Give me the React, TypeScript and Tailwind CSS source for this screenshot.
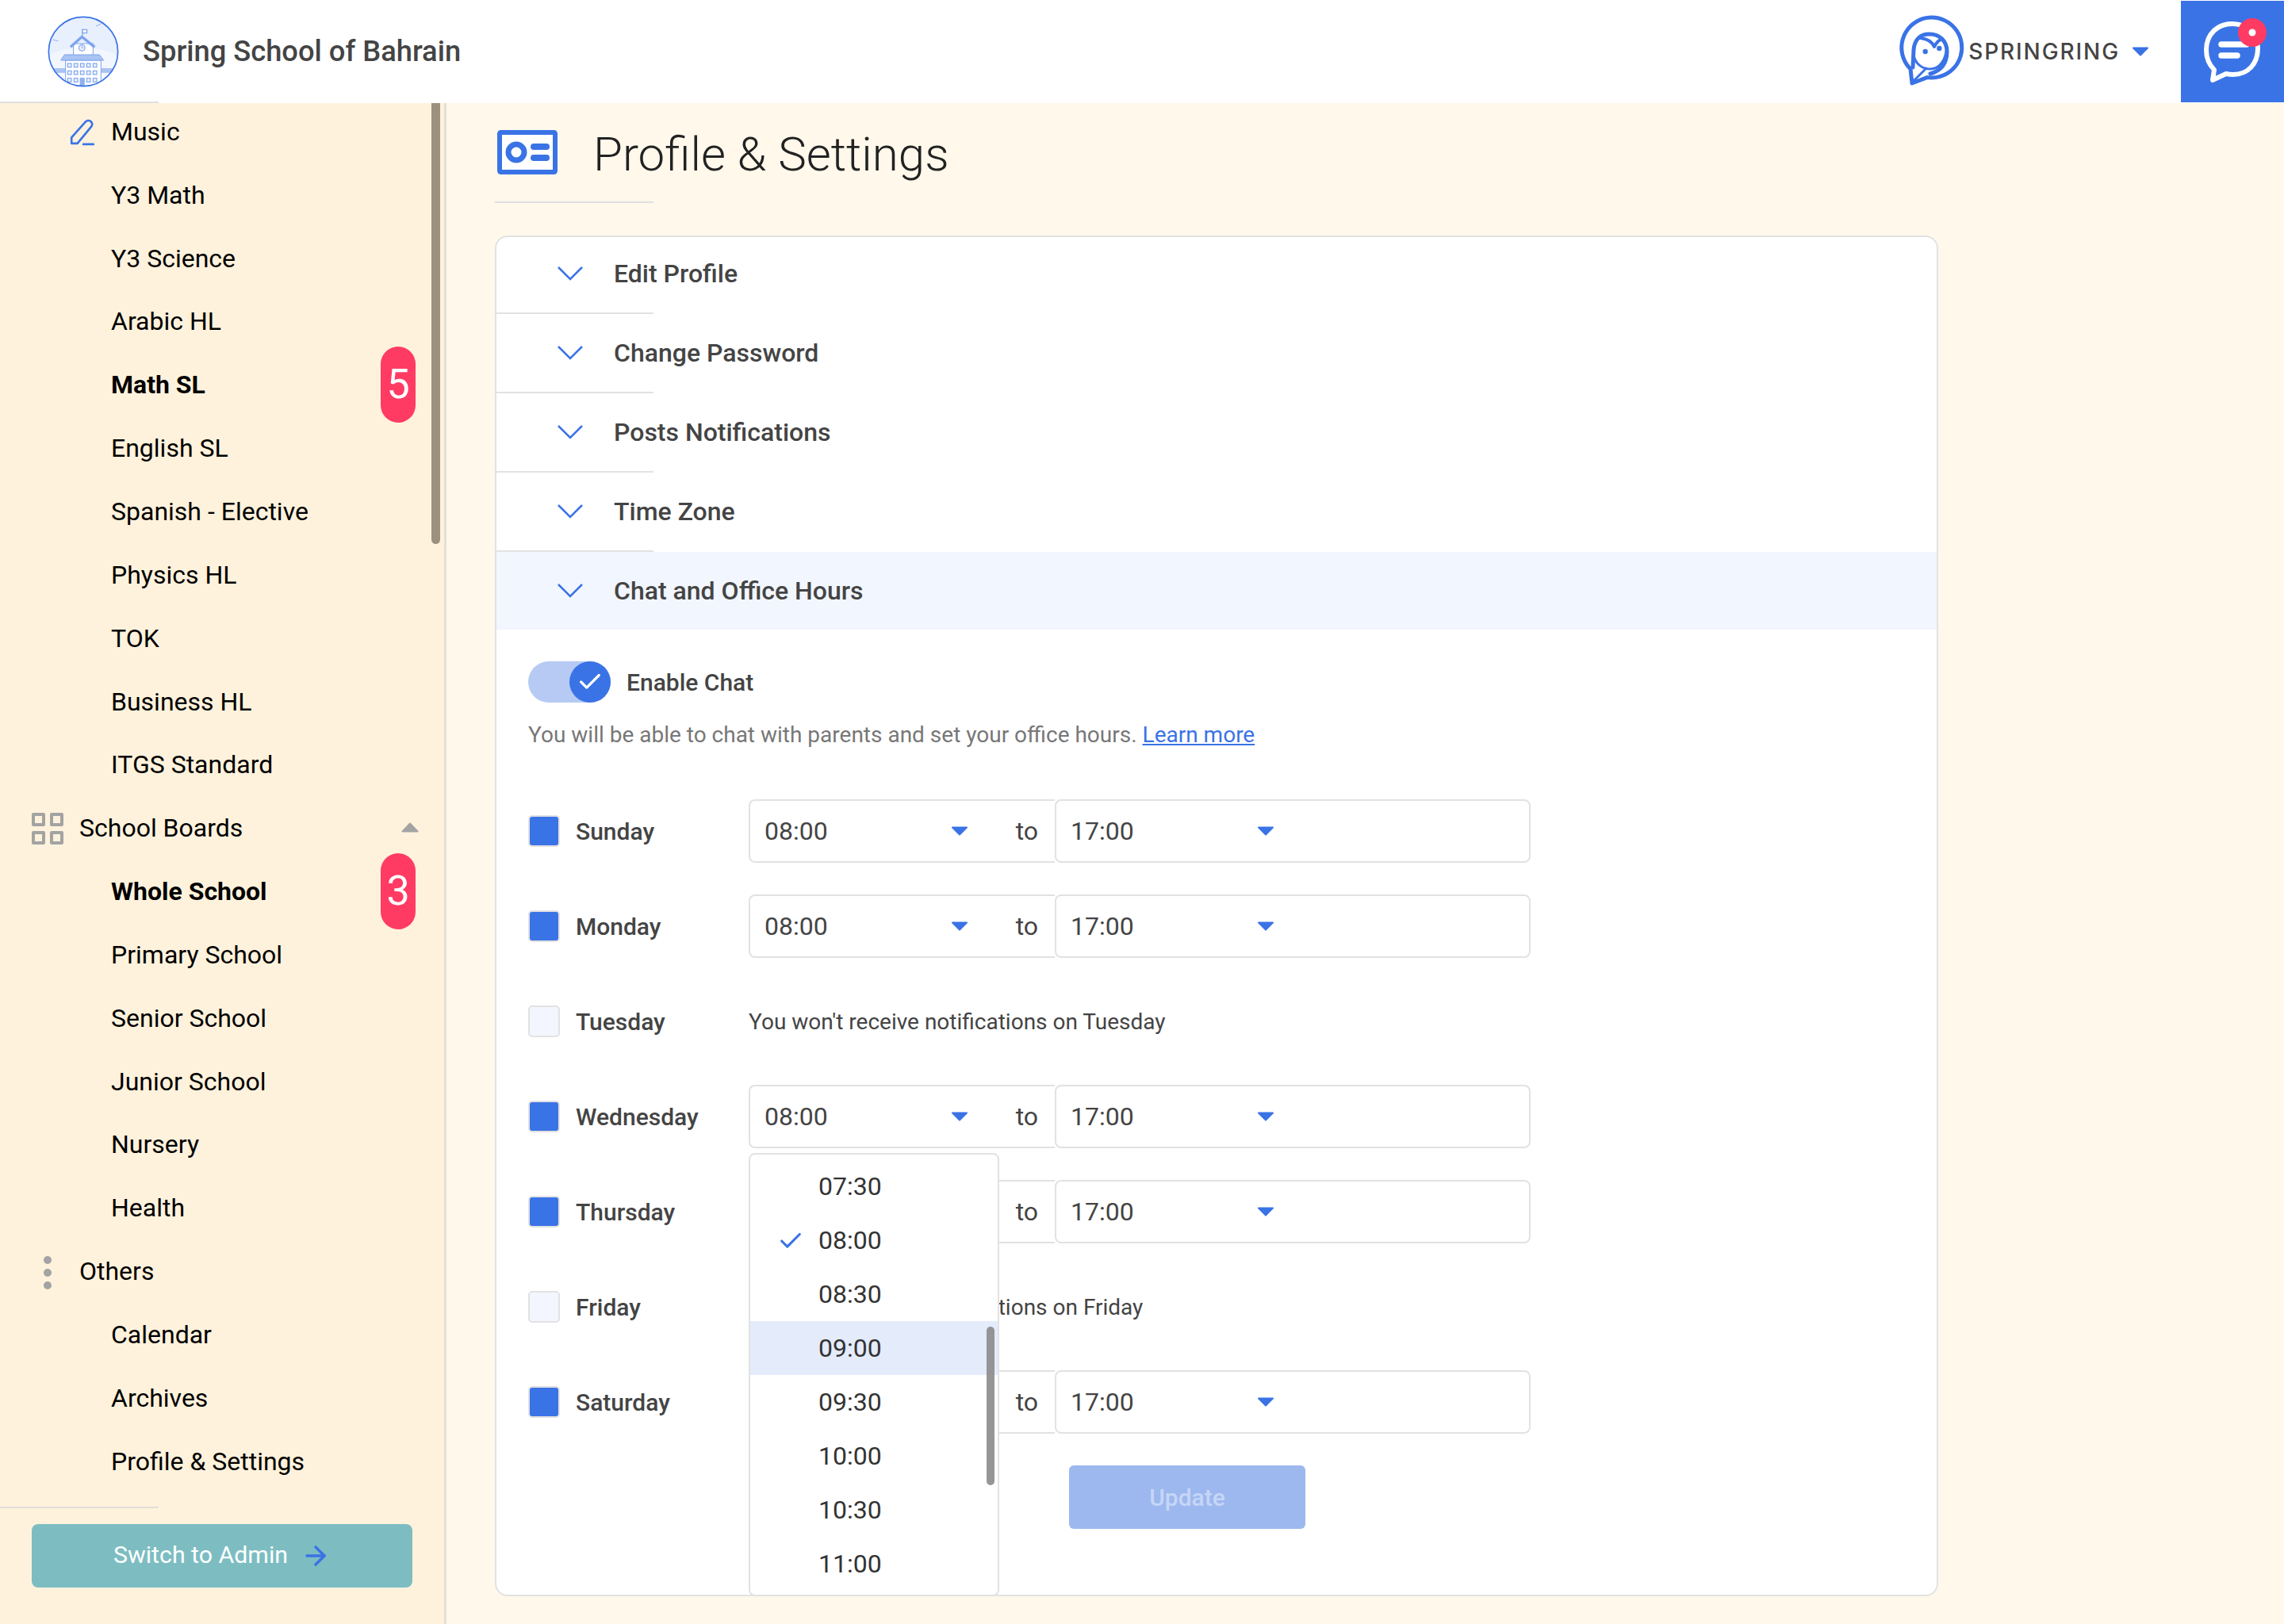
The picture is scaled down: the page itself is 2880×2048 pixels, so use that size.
import React from "react";
import { Check, ArrowRight } from "lucide-react";

const BLUE = "#3a73e6";

const SchoolLogo = () => (
  <svg viewBox="60 60 270 270" className="w-[90px] h-[90px] shrink-0">
    <defs>
      <clipPath id="logoClip">
        <circle cx="195" cy="195" r="131" />
      </clipPath>
    </defs>
    <circle cx="195" cy="195" r="131" fill="#e8effd" />
    <g clipPath="url(#logoClip)">
      <ellipse cx="195" cy="290" rx="190" ry="110" fill="#f2f6fe" />
      <rect x="60" y="258" width="270" height="16" fill="#a9c3f3" />
      <rect x="60" y="274" width="270" height="60" fill="#f5f8ff" stroke="#a9c3f3" strokeWidth="3" />
      <rect x="128" y="228" width="134" height="104" fill="#fff" stroke="#7da3ee" strokeWidth="3" />
      <rect x="158" y="165" width="74" height="44" fill="#fff" stroke="#7da3ee" strokeWidth="3" />
      <path d="M147 178L190 139L238 178" fill="none" stroke="#7da3ee" strokeWidth="10" />
      <path d="M124 207H256L272 228H110Z" fill="#a9c3f3" stroke="#7da3ee" strokeWidth="3" />
      <circle cx="190" cy="181" r="12" fill="#e8effd" stroke="#6f9aeb" strokeWidth="3" />
      <path d="M190 172V181H196" fill="none" stroke="#6f9aeb" strokeWidth="2" />
      <path d="M192 135V110" stroke="#6f9aeb" strokeWidth="3" />
      <rect x="192" y="112" width="17" height="13" fill="#f2f6fe" stroke="#6f9aeb" strokeWidth="3" />
      {[247, 275, 303].map((y) =>
        [136, 160, 184, 208, 232].map((x) => (
          <rect key={`${x}-${y}`} x={x} y={y - 7} width="14" height="14" fill="#e8effd" stroke="#6f9aeb" strokeWidth="3" />
        ))
      )}
      <rect x="182" y="298" width="18" height="34" fill="#8fb0f0" />
      <path d="M243 99L262 90L272 84M80 150L100 155M316 162L326 163" stroke="#8fb0f0" strokeWidth="3" fill="none" />
    </g>
    <circle cx="195" cy="195" r="131" fill="none" stroke={BLUE} strokeWidth="5" />
  </svg>
);

const OwlLogo = () => (
  <svg viewBox="0 0 86 100" className="w-[86px] h-[100px] shrink-0">
    <g fill="none" stroke={BLUE} strokeWidth="5" strokeLinejoin="round" strokeLinecap="round">
      <path d="M17 72A38 38 0 1 1 38 82.600L19 90Z" fill="#fff" />
      <path d="M20 70L21 48C22 34 30 28 41 28C54 28 63 37 63 50C63 64 56 74 42 78" />
      <path d="M22 58C25 67 33 72 42 72C53 72 60 62 62 50" strokeWidth="3" />
      <path d="M30 33C38 34 44 37 47 44C50 38 54 35 57 34" strokeWidth="4" />
      <path d="M21 87L37 71" strokeWidth="3" />
    </g>
    <circle cx="35.700" cy="50" r="3.200" fill={BLUE} />
    <circle cx="53.300" cy="46" r="3.200" fill={BLUE} />
  </svg>
);

const ChatBadge = () => (
  <svg viewBox="0 0 130 128" className="w-[130px] h-[128px]">
    <path
      d="M42 87C35 80 32 71 32 62C32 42 46 29 65 29C84 29 97 43 97 60C97 80 84 93 66 93C62 93 59 92.500 57 92L40 100Z"
      fill="none"
      stroke="#fff"
      strokeWidth="6"
      strokeLinejoin="round"
    />
    <path d="M51 55H83M51 69H71" stroke="#fff" strokeWidth="7.500" strokeLinecap="round" />
    <circle cx="90" cy="40" r="18" fill="#ff3b64" />
    <circle cx="90" cy="40" r="4.500" fill="#fff" />
  </svg>
);

const Caret = ({ className = "" }: { className?: string }) => (
  <svg viewBox="0 0 22 12" className={`w-[22px] h-[12px] shrink-0 ${className}`}>
    <path d="M2 1.500H20L11 10.500Z" fill={BLUE} stroke={BLUE} strokeWidth="2" strokeLinejoin="round" />
  </svg>
);

const NavItem = ({ label, bold, badge }: { label: string; bold?: boolean; badge?: string }) => (
  <div className="relative h-[79.850px] shrink-0 flex items-center pl-[140px]">
    <span className={`text-[32px] text-black ${bold ? "font-bold" : ""}`}>{label}</span>
    {badge && (
      <span className="absolute left-[480px] top-[-8px] w-[44px] h-[96px] rounded-full bg-[#ff3b64] text-white text-[52px] flex items-center justify-center">
        {badge}
      </span>
    )}
  </div>
);

const Sidebar = () => (
  <aside className="relative w-[563px] shrink-0 bg-[#fff2dc] border-r-[3px] border-[#e4e0d8] flex flex-col overflow-hidden">
    <div className="flex-1 overflow-hidden">
      <div className="relative h-[79.850px] -mt-[4px] flex items-center pl-[140px]">
        <svg viewBox="0 0 32 32" className="absolute left-[87px] top-[24px] w-[34px] h-[34px]" fill="none" stroke={BLUE} strokeWidth="2.500" strokeLinejoin="round" strokeLinecap="round">
          <path d="M3 29V22L20 3C22 1.500 24 1.500 26 3C28 5 28 7 26.500 9L10 29ZM17 30H29" />
        </svg>
        <span className="text-[32px] text-black">Music</span>
      </div>
      <NavItem label="Y3 Math" />
      <NavItem label="Y3 Science" />
      <NavItem label="Arabic HL" />
      <NavItem label="Math SL" bold badge="5" />
      <NavItem label="English SL" />
      <NavItem label="Spanish - Elective" />
      <NavItem label="Physics HL" />
      <NavItem label="TOK" />
      <NavItem label="Business HL" />
      <NavItem label="ITGS Standard" />
      <div className="relative h-[79.850px] flex items-center pl-[100px]">
        <div className="absolute left-[40px] top-[21px] grid grid-cols-2 gap-[6px] w-[40px]">
          {[0, 1, 2, 3].map((i) => (
            <span key={i} className="w-[17px] h-[17px] border-[4px] border-[#a3a3a3] rounded-[2px]" />
          ))}
        </div>
        <span className="text-[32px] text-black">School Boards</span>
        <svg viewBox="0 0 22 13" className="absolute left-[506px] top-[33px] w-[22px] h-[13px]">
          <path d="M11 1.500L20.500 11.500H1.500Z" fill="#a3a3a3" stroke="#a3a3a3" strokeWidth="2" strokeLinejoin="round" />
        </svg>
      </div>
      <NavItem label="Whole School" bold badge="3" />
      <NavItem label="Primary School" />
      <NavItem label="Senior School" />
      <NavItem label="Junior School" />
      <NavItem label="Nursery" />
      <NavItem label="Health" />
      <div className="relative h-[79.850px] flex items-center pl-[100px]">
        <div className="absolute left-[55px] top-[21px] flex flex-col gap-[6px]">
          <span className="w-[10px] h-[10px] rounded-full bg-[#a3a3a3]" />
          <span className="w-[10px] h-[10px] rounded-full bg-[#a3a3a3]" />
          <span className="w-[10px] h-[10px] rounded-full bg-[#a3a3a3]" />
        </div>
        <span className="text-[32px] text-black">Others</span>
      </div>
      <NavItem label="Calendar" />
      <NavItem label="Archives" />
      <NavItem label="Profile & Settings" />
    </div>
    <div className="w-[200px] h-[2px] bg-[#e2ded8] shrink-0" />
    <div className="shrink-0 px-[40px] pt-[20px] pb-[46px]">
      <button className="w-[480px] h-[80px] rounded-[8px] bg-[#7dbdc2] text-white text-[30.300px] flex items-center justify-center gap-[16px]">
        <span className="-mt-[3px]">Switch to Admin</span>
        <ArrowRight size={38} color={BLUE} strokeWidth={2.200} />
      </button>
    </div>
    <span className="absolute left-[544px] top-0 w-[11px] h-[556px] rounded-b-[6px] bg-[#9c917f]" />
  </aside>
);

const SECTIONS = ["Edit Profile", "Change Password", "Posts Notifications", "Time Zone"];

const AccordionRow = ({ label, open }: { label: string; open?: boolean }) => (
  <div className={`h-[98px] flex items-center ${open ? "bg-[#f2f6fe]" : ""}`}>
    <svg viewBox="0 0 32 18" className="ml-[77px] w-[32px] h-[18px]" fill="none" stroke={BLUE} strokeWidth="2.500">
      <path d="M1 1L16 16L31 1" />
    </svg>
    <span className="ml-[39px] text-[32px] font-medium text-[#444]">{label}</span>
  </div>
);

const TIMES = ["07:30", "08:00", "08:30", "09:00", "09:30", "10:00", "10:30", "11:00"];

const TimeDropdown = () => (
  <div className="absolute left-0 top-[86px] z-10 w-[316px] h-[559px] bg-white border-2 border-[#e2e2e2] rounded-[8px] pt-[6px] overflow-hidden">
    {TIMES.map((t) => (
      <div key={t} className={`relative h-[68px] flex items-center pl-[86px] text-[32px] text-[#333] ${t === "09:00" ? "bg-[#e4ebfb]" : ""}`}>
        {t === "08:00" && <Check className="absolute left-[34px] top-[18px] w-[34px] h-[34px]" color={BLUE} strokeWidth={2.200} />}
        {t}
      </div>
    ))}
    <span className="absolute right-[4px] top-[217px] w-[10px] h-[200px] rounded-full bg-[#8b8b8b]/90" />
  </div>
);

const DayRow = ({ day, off, open }: { day: string; off?: boolean; open?: boolean }) => (
  <div className="h-[120px] flex items-center">
    <span className={`w-[40px] h-[40px] rounded-[5px] border-2 border-[#e2e2e2] shrink-0 ${off ? "bg-[#f3f6fe]" : "bg-[#3a73e6]"}`} />
    <span className="w-[238px] pl-[20px] shrink-0 text-[30px] font-medium text-[#444]">{day}</span>
    {off ? (
      <span className="pt-[2px] text-[28px] text-[#444]">You won't receive notifications on {day}</span>
    ) : (
      <div className="relative flex w-[986px] h-[80px]">
        <div className="w-[386px] h-full border-2 border-r-0 border-[#e2e2e2] rounded-l-[8px] flex items-center pl-[18px] text-[32px] text-[#444]">
          <span>08:00</span>
          <Caret className="ml-[155px]" />
          <span className="ml-[60px]">to</span>
        </div>
        <div className="flex-1 h-full border-2 border-[#e2e2e2] rounded-[8px] flex items-center pl-[18px] text-[32px] text-[#444]">
          <span>17:00</span>
          <Caret className="ml-[155px]" />
        </div>
        {open && <TimeDropdown />}
      </div>
    )}
  </div>
);

export default function App() {
  return (
    <div className="w-[2880px] h-[2048px] overflow-hidden flex flex-col bg-[#fff8eb] [font-family:Roboto,sans-serif]">
      <header className="relative h-[130px] shrink-0 bg-white flex items-center">
        <div className="ml-[60px]">
          <SchoolLogo />
        </div>
        <span className="ml-[30px] text-[36.300px] font-medium text-[#444]">Spring School of Bahrain</span>
        <div className="ml-auto flex items-center">
          <OwlLogo />
          <span className="ml-[4px] text-[28px] font-medium tracking-[1.900px] text-[#444] [font-family:Inter,sans-serif]">SPRINGRING</span>
          <Caret className="ml-[15px] mr-[40px]" />
          <div className="w-[130px] h-[128px] self-start bg-[#3a73e6]">
            <ChatBadge />
          </div>
        </div>
        <span className="absolute left-0 bottom-0 w-[200px] h-[2px] bg-[#e0e0e0]" />
      </header>
      <div className="flex-1 flex min-h-0">
        <Sidebar />
        <main className="flex-1 pl-[61px]">
          <div className="flex items-center h-[124px]">
            <svg viewBox="0 0 76 56" className="ml-[3px] w-[76px] h-[56px]">
              <rect x="3" y="3" width="70" height="50" rx="1.500" fill="#fff" stroke={BLUE} strokeWidth="6" />
              <circle cx="24" cy="28" r="10" fill="none" stroke={BLUE} strokeWidth="7" />
              <path d="M46 21H62M46 35H62" stroke={BLUE} strokeWidth="8" strokeLinecap="round" />
            </svg>
            <h1 className="ml-[45px] text-[60px] font-light text-[#222] mt-[6px]">Profile &amp; Settings</h1>
          </div>
          <div className="w-[200px] h-[2px] bg-[#e0e0e0]" />
          <section className="mt-[41px] w-[1820px] h-[1716px] bg-white border-2 border-[#e2e2e2] rounded-[16px]">
            <div className="-mt-[3px]">
              {SECTIONS.map((s) => (
                <div key={s}>
                  <AccordionRow label={s} />
                  <div className="w-[198px] h-[2px] bg-[#e2e2e2]" />
                </div>
              ))}
              <AccordionRow label="Chat and Office Hours" open />
            </div>
            <div className="pl-[40px]">
              <div className="mt-[40px] flex items-center">
                <div className="relative w-[104px] h-[52px] rounded-full bg-[#b6caf4]">
                  <span className="absolute right-0 top-0 w-[52px] h-[52px] rounded-full bg-[#3a73e6] flex items-center justify-center">
                    <Check size={34} color="#fff" strokeWidth={2.300} />
                  </span>
                </div>
                <span className="ml-[20px] text-[30px] font-medium text-[#444]">Enable Chat</span>
              </div>
              <p className="mt-[21px] text-[28px] text-[#777] h-[40px] leading-[40px]">
                You will be able to chat with parents and set your office hours.{" "}
                <span className="text-[#3a73e6] underline">Learn more</span>
              </p>
              <div className="mt-[41px]">
                <DayRow day="Sunday" />
                <DayRow day="Monday" />
                <DayRow day="Tuesday" off />
                <DayRow day="Wednesday" open />
                <DayRow day="Thursday" />
                <DayRow day="Friday" off />
                <DayRow day="Saturday" />
              </div>
              <button className="mt-[20px] ml-[682px] w-[298px] h-[80px] rounded-[6px] bg-[#9db8ee] text-[#c6d6f7] text-[30px] font-medium">
                Update
              </button>
            </div>
          </section>
        </main>
      </div>
    </div>
  );
}
